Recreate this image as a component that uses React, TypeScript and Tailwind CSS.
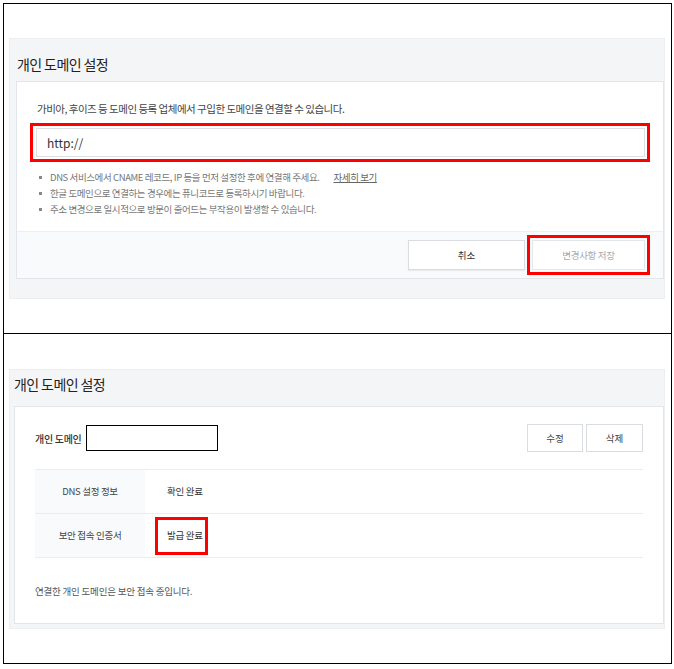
export default function App() {
  return (
    <div className="w-[674px] h-[669px] bg-white pt-[3px] pl-[3px] font-['Noto_Sans_CJK_KR','Noto_Sans',sans-serif] text-[#333]">
      <div className="w-[669px] h-[661px] border border-black flex flex-col">
        {/* Top: domain input form */}
        <section className="h-[330px] border-b border-black pt-[34px] pl-[5px]">
          <div className="w-[656px] bg-[#f4f5f7] border border-[#eceef1] pl-[6px] pb-[19px]">
            <h2 className="pt-[15px] pl-[1px] text-[14px] leading-[20px] tracking-[-0.6px] text-[#222]">
              개인 도메인 설정
            </h2>
            <div className="mt-[7px] bg-white border border-[#e2e5e9]">
              <p className="pt-[21px] pl-[20px] text-[10.5px] leading-[12px] tracking-[-0.5px] text-[#444]">
                가비아, 후이즈 등 도메인 등록 업체에서 구입한 도메인을 연결할 수 있습니다.
              </p>
              <div className="mt-[8px] ml-[13px] w-[620px] border-[3px] border-[#ff0000] pl-[3px] pr-[2px] py-[2px]">
                <div className="h-[29px] border border-[#dde1e6] flex items-center pl-[10px] text-[12px] text-[#333]">
                  http://
                </div>
              </div>
              <ul className="mt-[7px] pl-[22px] text-[9.5px] leading-[16px] tracking-[-0.4px] text-[#777]">
                <BulletItem>
                  DNS 서비스에서 CNAME 레코드, IP 등을 먼저 설정한 후에 연결해 주세요.
                  <span className="ml-[14px] underline text-[#666]">자세히 보기</span>
                </BulletItem>
                <BulletItem>한글 도메인으로 연결하는 경우에는 퓨니코드로 등록하시기 바랍니다.</BulletItem>
                <BulletItem>주소 변경으로 일시적으로 방문이 줄어드는 부작용이 발생할 수 있습니다.</BulletItem>
              </ul>
              <div className="mt-[14px] h-[47px] border-t border-[#eceef1] bg-[#f9fafb] flex items-center justify-end pr-[13px] gap-[2px]">
                <button className="w-[117px] h-[30px] bg-white border border-[#d9dde2] shadow-[0_1px_1px_rgba(0,0,0,0.06)] text-[9.5px] text-[#333]">
                  취소
                </button>
                <div className="border-[3px] border-[#ff0000] p-[2px]">
                  <button className="w-[113px] h-[30px] bg-white border border-[#e3e6ea] text-[9.5px] tracking-[-0.3px] text-[#a5a9ae]">
                    변경사항 저장
                  </button>
                </div>
              </div>
            </div>
          </div>
        </section>

        {/* Bottom: connected domain status */}
        <section className="flex-1 pt-[35px] pl-[5px]">
          <div className="w-[656px] bg-[#f4f5f7] border border-[#eceef1] pl-[4px] pb-[4px]">
            <h2 className="pt-[4px] text-[14px] leading-[20px] tracking-[-0.6px] text-[#222]">
              개인 도메인 설정
            </h2>
            <div className="mt-[12px] bg-white border border-[#e2e5e9] pl-[20px] pr-[20px]">
              <div className="pt-[17px] flex items-center">
                <span className="text-[10px] tracking-[-0.3px] text-[#333] font-medium">개인 도메인</span>
                <div className="ml-[5px] w-[132px] h-[26px] border border-black bg-white" />
                <div className="ml-auto flex gap-[3px]">
                  <button className="w-[56px] h-[28px] bg-white border border-[#d9dde2] text-[9.5px] text-[#444]">수정</button>
                  <button className="w-[57px] h-[28px] bg-white border border-[#d9dde2] text-[9.5px] text-[#444]">삭제</button>
                </div>
              </div>
              <div className="mt-[17px] border-t border-[#eaecef]">
                <StatusRow label="DNS 설정 정보" value="확인 완료" />
                <StatusRow label="보안 접속 인증서" value="발급 완료" highlight />
              </div>
              <p className="pt-[25px] pb-[24px] text-[9.5px] leading-[16px] tracking-[-0.2px] text-[#555]">
                연결한 개인 도메인은 보안 접속 중입니다.
              </p>
            </div>
          </div>
        </section>
      </div>
    </div>
  )
}

function BulletItem({ children }: { children: React.ReactNode }) {
  return (
    <li className="flex items-center">
      <span className="w-[3px] h-[3px] bg-[#888] mr-[8px] shrink-0" />
      <span>{children}</span>
    </li>
  )
}

function StatusRow({ label, value, highlight }: { label: string; value: string; highlight?: boolean }) {
  return (
    <div className="h-[44px] flex border-b border-[#eaecef]">
      <div className="w-[110px] bg-[#f9fafb] flex items-center justify-center text-[9.5px] tracking-[-0.3px] text-[#444]">
        {label}
      </div>
      <div className="flex items-center pl-[10px]">
        <span
          className={
            highlight
              ? 'h-[38px] flex items-center border-[3px] border-[#ff0000] pl-[9px] pr-[2px] text-[9.5px] tracking-[-0.3px] text-[#333]'
              : 'h-[38px] flex items-center border-[3px] border-transparent pl-[9px] pr-[2px] text-[9.5px] tracking-[-0.3px] text-[#333]'
          }
        >
          {value}
        </span>
      </div>
    </div>
  )
}
